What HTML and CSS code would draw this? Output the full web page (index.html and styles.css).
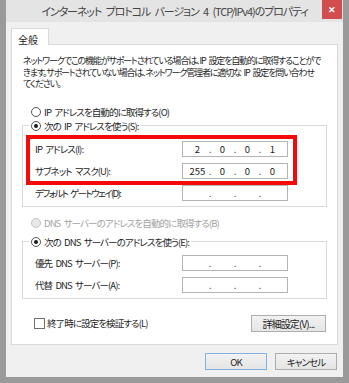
FILE: index.html
```html
<!DOCTYPE html>
<html lang="ja">
<head>
    <meta charset="UTF-8">
    <meta name="viewport" content="width=device-width, initial-scale=1.0">
    <title>インターネット プロトコル バージョン 4 (TCP/IPv4)のプロパティ</title>
    <link rel="stylesheet" href="styles.css">
</head>
<body>
    <div class="window">
        <div class="titlebar">
            <span class="title">インターネット プロトコル バージョン 4 (TCP/IPv4)のプロパティ</span>
            <span class="close">&#x2715;</span>
        </div>

        <div class="client">
            <div class="tabs">
                <div class="tab">全般</div>
            </div>

            <div class="panel">
                <p class="desc">ネットワークでこの機能がサポートされている場合は、IP 設定を自動的に取得することがで<br>きます。サポートされていない場合は、ネットワーク管理者に適切な IP 設定を問い合わせ<br>てください。</p>

                <label class="option first">
                    <span class="radio"></span>IP アドレスを自動的に取得する(O)
                </label>

                <fieldset class="group">
                    <legend class="option"><span class="radio checked"></span>次の IP アドレスを使う(S):</legend>
                    <div class="highlight">
                        <div class="row">
                            <span class="row-label">IP アドレス(I):</span>
                            <span class="ip"><i>2</i><b>.</b><i>0</i><b>.</b><i>0</i><b>.</b><i>1</i></span>
                        </div>
                        <div class="row">
                            <span class="row-label">サブネット マスク(U):</span>
                            <span class="ip"><i>255</i><b>.</b><i>0</i><b>.</b><i>0</i><b>.</b><i>0</i></span>
                        </div>
                    </div>
                    <div class="row">
                        <span class="row-label kana">デフォルト ゲートウェイ(D):</span>
                        <span class="ip"><i></i><b>.</b><i></i><b>.</b><i></i><b>.</b><i></i></span>
                    </div>
                </fieldset>

                <label class="option disabled dns-auto">
                    <span class="radio"></span>DNS サーバーのアドレスを自動的に取得する(B)
                </label>

                <fieldset class="group dns">
                    <legend class="option"><span class="radio checked"></span>次の DNS サーバーのアドレスを使う(E):</legend>
                    <div class="row">
                        <span class="row-label">優先 DNS サーバー(P):</span>
                        <span class="ip"><i></i><b>.</b><i></i><b>.</b><i></i><b>.</b><i></i></span>
                    </div>
                    <div class="row">
                        <span class="row-label">代替 DNS サーバー(A):</span>
                        <span class="ip"><i></i><b>.</b><i></i><b>.</b><i></i><b>.</b><i></i></span>
                    </div>
                </fieldset>

                <div class="panel-footer">
                    <label class="check"><span class="box"></span>終了時に設定を検証する(L)</label>
                    <button class="btn advanced">詳細設定(V)...</button>
                </div>
            </div>

            <div class="actions">
                <button class="btn default">OK</button>
                <button class="btn">キャンセル</button>
            </div>
        </div>
    </div>
</body>
</html>
```

FILE: styles.css
```css
:root {
    --frame: #9a9a9a;
    --titlebar: #e4e4e4;
    --face: #f0f0f0;
    --text: #1e1e1e;
    --muted: #a2a2a2;
    --line: #dadada;
    --field: #b4b4b4;
}

* {
    margin: 0;
    padding: 0;
    box-sizing: border-box;
}

body {
    font-family: "Noto Sans CJK JP", "Noto Sans", sans-serif;
    font-feature-settings: "palt" 1;
    font-size: 9.5px;
    letter-spacing: -0.9px;
    word-spacing: 2px;
    color: var(--text);
    background: var(--frame);
}

.window {
    width: 349px;
    height: 383px;
    padding: 0 6px 6px;
    display: flex;
    flex-direction: column;
    background: var(--frame);
}

/* Title bar */
.titlebar {
    height: 22px;
    display: flex;
    align-items: center;
    justify-content: center;
    position: relative;
    background: var(--titlebar);
}

.title {
    font-size: 11px;
    letter-spacing: -1.1px;
    word-spacing: 3px;
    color: #444;
}

.close {
    position: absolute;
    top: 0;
    right: 1px;
    width: 20px;
    height: 19px;
    display: flex;
    align-items: center;
    justify-content: center;
    background: #d24e4e;
    color: #fff;
    font-size: 9px;
    font-weight: 700;
    letter-spacing: 0;
}

/* Client area */
.client {
    flex: 1;
    display: flex;
    flex-direction: column;
    padding: 6px 5px 7px;
    background: var(--face);
}

.tabs {
    display: flex;
    height: 17px;
}

.tab {
    width: 38px;
    padding: 3px 0 0 6px;
    background: #fff;
    border: 1px solid var(--line);
    border-bottom: none;
    position: relative;
    z-index: 1;
    font-size: 10px;
    letter-spacing: 0;
}

.panel {
    margin-top: -1px;
    height: 301px;
    padding: 10px 11px 0;
    background: #fff;
    border: 1px solid var(--line);
    display: flex;
    flex-direction: column;
}

.desc {
    font-size: 9px;
    letter-spacing: -1.15px;
    line-height: 11.5px;
    white-space: nowrap;
}

.option {
    display: flex;
    align-items: center;
    height: 14px;
    gap: 3px;
}

.first {
    margin: 15px 0 0 8px;
}

.radio {
    width: 10px;
    height: 10px;
    border-radius: 50%;
    border: 1px solid #555;
    background: #fff;
    display: flex;
    align-items: center;
    justify-content: center;
    flex-shrink: 0;
}

.radio.checked::after {
    content: '';
    width: 4px;
    height: 4px;
    border-radius: 50%;
    background: #1a1a1a;
}

.disabled {
    color: var(--muted);
}

.disabled .radio {
    border-color: #c4c4c4;
    background: #e8e8e8;
}

.dns-auto {
    margin: 9px 0 0 8px;
}

/* Group boxes */
.group {
    margin: 0 -1px;
    padding: 5px 38px 2px 12px;
    border: 1px solid var(--line);
}

.group legend {
    margin-left: -6px;
    padding: 0 2px;
}

.dns {
    margin-top: 5px;
    padding-top: 3px;
}

.row {
    height: 22px;
    display: flex;
    align-items: center;
}

.row-label {
    flex: 1;
}

.kana {
    letter-spacing: -1.6px;
}

.highlight {
    position: relative;
}

.highlight::after {
    content: '';
    position: absolute;
    top: -3px;
    bottom: -3px;
    left: -9px;
    right: -9px;
    border: 4px solid #f50a0a;
}

.ip {
    width: 106px;
    height: 16px;
    padding-left: 4px;
    display: flex;
    align-items: center;
    border: 1px solid var(--field);
    background: #fff;
    letter-spacing: 0;
}

.ip i {
    font-style: normal;
    width: 21px;
    text-align: center;
}

.ip b {
    font-weight: 400;
    width: 4px;
    text-align: center;
}

/* Footer of the panel */
.panel-footer {
    margin-top: 16px;
    display: flex;
    align-items: center;
    justify-content: space-between;
}

.check {
    display: flex;
    align-items: center;
    gap: 2px;
    padding-left: 11px;
}

.box {
    width: 11px;
    height: 11px;
    border: 1px solid #707070;
    background: #fff;
}

.btn {
    height: 17px;
    font: inherit;
    letter-spacing: inherit;
    color: var(--text);
    background: linear-gradient(#f2f2f2, #e5e5e5);
    border: 1px solid #adadad;
}

.advanced {
    width: 75px;
    font-size: 10px;
}

.actions {
    margin-top: 8px;
    display: flex;
    justify-content: flex-end;
    gap: 8px;
    padding-right: 1px;
}

.actions .btn {
    width: 62px;
}

.default {
    border-color: #7fb2e0;
}
```
